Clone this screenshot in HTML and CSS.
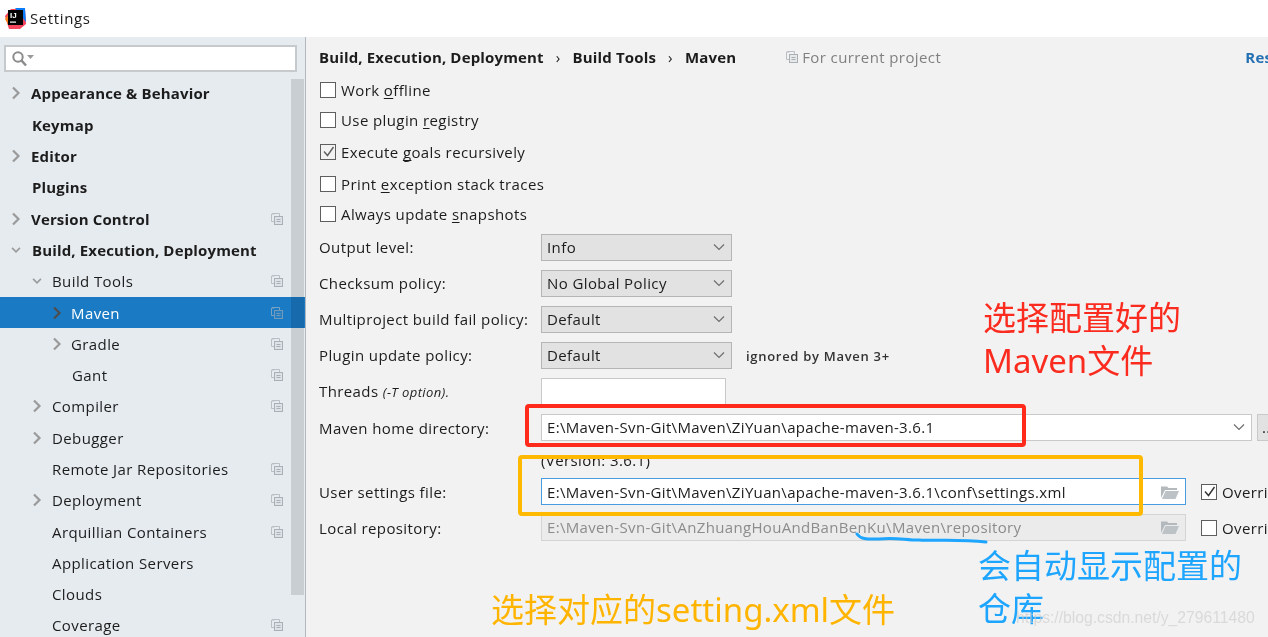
FILE: index.html
```html
<!DOCTYPE html>
<html lang="en">

<head>
    <meta charset="UTF-8">
    <meta name="viewport" content="width=device-width, initial-scale=1.0">
    <title>Settings</title>
    <link rel="stylesheet" href="styles.css">
</head>

<body>
    <svg class="defs" width="0" height="0">
        <symbol id="copy" viewBox="0 0 12 12">
            <path d="M3.5 1H0.5V8.5H3M1 .5H8.5V3" fill="none" stroke="#b9bfc4"/>
            <rect x="3.5" y="3.5" width="8" height="8" fill="#a9afb5" fill-opacity=".15" stroke="#a9afb5"/>
            <path d="M5.5 6.5H9.5M5.5 8.5H9.5" stroke="#a9afb5"/>
        </symbol>
        <symbol id="chev-right" viewBox="0 0 10 14">
            <path d="M2 1.5L7.5 7L2 12.5" fill="none" stroke="#9a9a9a" stroke-width="2.2"/>
        </symbol>
        <symbol id="chev-down" viewBox="0 0 14 10">
            <path d="M1.5 2L7 7.5L12.5 2" fill="none" stroke="#9a9a9a" stroke-width="2.2"/>
        </symbol>
        <symbol id="caret" viewBox="0 0 12 8">
            <path d="M1 1.5L6 6.5L11 1.5" fill="none" stroke="#6e6e6e" stroke-width="1.2"/>
        </symbol>
        <symbol id="folder" viewBox="0 0 18 14">
            <path d="M0 1.5H6L7.5 3H16V5H4L0 13Z" fill="#b4b9bd"/>
            <path d="M4.5 6H18L14.5 14H1Z" fill="#bcc2c6"/>
        </symbol>
    </svg>

    <header class="titlebar">
        <svg class="app-icon" width="21" height="21" viewBox="0 0 21 21">
            <path d="M0 8L6 1H20L21 16L15 21H4Z" fill="#f5455c"/>
            <path d="M10 0H20L21 14Z" fill="#087cfa"/>
            <path d="M0 11L4 6V18Z" fill="#fc801d"/>
            <rect x="3" y="2" width="15" height="15" fill="#000"/>
            <text x="5" y="10" class="app-icon-text">IJ</text>
            <rect x="5" y="13.5" width="6" height="1.2" fill="#fff"/>
        </svg>
        <span class="title-text">Settings</span>
    </header>

    <div class="window">
        <aside class="sidebar">
            <div class="search">
                <svg width="24" height="18" viewBox="0 0 24 18">
                    <circle cx="7" cy="7" r="4.7" fill="none" stroke="#8c8c8c" stroke-width="2"/>
                    <path d="M10.5 10.5L15 15.5" stroke="#8c8c8c" stroke-width="2.6"/>
                    <path d="M16 5H23L19.5 9Z" fill="#9a9a9a"/>
                </svg>
            </div>
            <ul class="tree">
                <li class="node bold"><svg class="chev"><use href="#chev-right"/></svg>Appearance &amp; Behavior</li>
                <li class="node bold leaf">Keymap</li>
                <li class="node bold"><svg class="chev"><use href="#chev-right"/></svg>Editor</li>
                <li class="node bold leaf">Plugins</li>
                <li class="node bold"><svg class="chev"><use href="#chev-right"/></svg>Version Control<svg class="copy"><use href="#copy"/></svg></li>
                <li class="node bold open"><svg class="chev"><use href="#chev-down"/></svg>Build, Execution, Deployment</li>
                <li class="node lvl2"><svg class="chev"><use href="#chev-down"/></svg>Build Tools<svg class="copy"><use href="#copy"/></svg></li>
                <li class="node lvl3 selected"><svg class="chev"><use href="#chev-right"/></svg>Maven<svg class="copy"><use href="#copy"/></svg></li>
                <li class="node lvl3"><svg class="chev"><use href="#chev-right"/></svg>Gradle<svg class="copy"><use href="#copy"/></svg></li>
                <li class="node lvl3 leaf">Gant<svg class="copy"><use href="#copy"/></svg></li>
                <li class="node lvl2"><svg class="chev"><use href="#chev-right"/></svg>Compiler<svg class="copy"><use href="#copy"/></svg></li>
                <li class="node lvl2"><svg class="chev"><use href="#chev-right"/></svg>Debugger</li>
                <li class="node lvl2 leaf">Remote Jar Repositories<svg class="copy"><use href="#copy"/></svg></li>
                <li class="node lvl2"><svg class="chev"><use href="#chev-right"/></svg>Deployment<svg class="copy"><use href="#copy"/></svg></li>
                <li class="node lvl2 leaf">Arquillian Containers<svg class="copy"><use href="#copy"/></svg></li>
                <li class="node lvl2 leaf">Application Servers</li>
                <li class="node lvl2 leaf">Clouds</li>
                <li class="node lvl2 leaf">Coverage<svg class="copy"><use href="#copy"/></svg></li>
            </ul>
            <div class="scrollbar"></div>
        </aside>

        <main class="content">
            <div class="crumbs">
                <b>Build, Execution, Deployment</b><i class="sep">›</i>
                <b>Build Tools</b><i class="sep">›</i>
                <b>Maven</b>
                <span class="scope"><svg class="scope-icon"><use href="#copy"/></svg>For current project</span>
                <b class="reset">Res</b>
            </div>

            <div class="check-row"><span class="box"></span><span>Work <u>o</u>ffline</span></div>
            <div class="check-row short"><span class="box"></span><span>Use plugin <u>r</u>egistry</span></div>
            <div class="check-row tall"><span class="box checked"><svg width="13" height="13" viewBox="0 0 13 13"><path d="M2 6.5L5.5 10.5L11.5 2" fill="none" stroke="#5f5f5f" stroke-width="1.4"/></svg></span><span>Execute <u>g</u>oals recursively</span></div>
            <div class="check-row"><span class="box"></span><span>Print <u>e</u>xception stack traces</span></div>
            <div class="check-row last"><span class="box"></span><span>Always update <u>s</u>napshots</span></div>

            <div class="form-row">
                <label>Output level:</label>
                <div class="select">Info<svg class="caret"><use href="#caret"/></svg></div>
            </div>
            <div class="form-row">
                <label>Checksum policy:</label>
                <div class="select">No Global Policy<svg class="caret"><use href="#caret"/></svg></div>
            </div>
            <div class="form-row">
                <label>Multiproject build fail policy:</label>
                <div class="select">Default<svg class="caret"><use href="#caret"/></svg></div>
            </div>
            <div class="form-row">
                <label>Plugin update policy:</label>
                <div class="select">Default<svg class="caret"><use href="#caret"/></svg></div>
                <span class="hint">ignored by Maven 3+</span>
            </div>
            <div class="form-row">
                <label>Threads <em>(-T option).</em></label>
                <div class="field threads"></div>
            </div>
            <div class="form-row lower">
                <label>Maven home directory:</label>
                <div class="field home">E:\Maven-Svn-Git\Maven\ZiYuan\apache-maven-3.6.1<svg class="caret"><use href="#caret"/></svg></div>
                <div class="more">...</div>
            </div>
            <div class="version-row">(Version: 3.6.1)</div>
            <div class="form-row lower">
                <label>User settings file:</label>
                <div class="field path focused">E:\Maven-Svn-Git\Maven\ZiYuan\apache-maven-3.6.1\conf\settings.xml<svg class="folder"><use href="#folder"/></svg></div>
                <span class="box checked override-box"><svg width="13" height="13" viewBox="0 0 13 13"><path d="M2 6.5L5.5 10.5L11.5 2" fill="none" stroke="#333" stroke-width="1.4"/></svg></span>
                <span class="override">Overri</span>
            </div>
            <div class="form-row lower">
                <label>Local repository:</label>
                <div class="field path disabled">E:\Maven-Svn-Git\AnZhuangHouAndBanBenKu\Maven\repository<svg class="folder"><use href="#folder"/></svg></div>
                <span class="box override-box"></span>
                <span class="override">Overri</span>
            </div>
        </main>
    </div>

    <!-- annotations drawn on top of the screenshot -->
    <div class="mark mark-red"></div>
    <div class="mark mark-yellow"></div>
    <svg class="scribble" width="140" height="16" viewBox="0 0 140 16">
        <path d="M2 2C6 8 14 7 24 7C40 5 50 8 64 8C84 9 104 7 131 10" fill="none" stroke="#1ea5ff" stroke-width="3" stroke-linecap="round"/>
    </svg>
    <p class="note note-red">选择配置好的<br>Maven文件</p>
    <p class="note note-blue">会自动显示配置的<br>仓库</p>
    <p class="note note-yellow">选择对应的setting.xml文件</p>
    <span class="watermark">https://blog.csdn.net/y_279611480</span>
</body>

</html>
```

FILE: styles.css
```css
* {
    box-sizing: border-box;
}

html,
body {
    margin: 0;
    height: 637px;
    overflow: hidden;
}

body {
    position: relative;
    font-family: "Open Sans", "Noto Sans", Arial, sans-serif;
    font-size: 15px;
    letter-spacing: 0.4px;
    color: #1c1c1c;
    background-color: #f2f2f2;
}

b,
.bold {
    font-weight: 700;
    letter-spacing: 0.15px;
}

.defs {
    position: absolute;
}

.titlebar {
    display: flex;
    align-items: center;
    gap: 4px;
    height: 37px;
    padding-left: 5px;
    background-color: #ffffff;
}

.title-text {
    padding-bottom: 2px;
    letter-spacing: 0.6px;
}

.app-icon-text {
    font-family: "Liberation Sans", sans-serif;
    font-size: 8px;
    font-weight: bold;
    letter-spacing: 0;
    fill: #ffffff;
}

.window {
    display: flex;
    height: 600px;
}

/* left tree */
.sidebar {
    position: relative;
    flex: none;
    width: 306px;
    padding-top: 8px;
    overflow: hidden;
    background-color: #e6ebf0;
    border-right: 1px solid #b4b8bc;
}

.search {
    display: flex;
    align-items: center;
    width: 293px;
    height: 27px;
    margin-left: 4px;
    padding-left: 5px;
    background-color: #ffffff;
    border: 2px solid #c6cacd;
}

.tree {
    margin: 5.8px 0 0;
    padding: 0;
    list-style: none;
}

.node {
    display: flex;
    align-items: center;
    height: 31.3px;
    padding-left: 11px;
    white-space: nowrap;
}

.node.leaf {
    padding-left: 32px;
}

.node.open .chev {
    margin-right: 11px;
}

.node.lvl2 {
    padding-left: 32px;
}

.node.lvl2.leaf {
    padding-left: 52px;
}

.node.lvl3 {
    padding-left: 52px;
}

.node.lvl3 .chev {
    margin-right: 9px;
}

.node.lvl3.leaf {
    padding-left: 72px;
}

.selected {
    color: #ffffff;
    background-color: #1a7ac4;
}

.chev {
    flex: none;
    width: 10px;
    height: 14px;
    margin-right: 10px;
}

.copy {
    flex: none;
    width: 12px;
    height: 12px;
    margin-left: auto;
    margin-right: 22px;
}

.selected .chev {
    filter: brightness(0.5);
}

.selected .copy {
    opacity: 0.6;
}

.scrollbar {
    position: absolute;
    top: 42px;
    right: 1px;
    width: 13px;
    height: 516px;
    background-color: #dfe0e0;
    mix-blend-mode: multiply;
}

/* right panel */
.content {
    flex: 1;
    min-width: 0;
    padding-left: 13px;
    overflow: hidden;
}

.crumbs {
    display: flex;
    align-items: center;
    height: 37.5px;
    padding-top: 2px;
    white-space: nowrap;
}

.sep {
    margin: 0 12px;
    font-style: normal;
}

.scope {
    display: flex;
    align-items: center;
    margin-left: 50px;
    color: #808080;
}

.scope-icon {
    width: 12px;
    height: 12px;
    margin-right: 4px;
}

.reset {
    margin-left: auto;
    margin-right: -4px;
    color: #2470b3;
}

.check-row {
    display: flex;
    align-items: center;
    height: 31px;
}

.check-row.short {
    height: 29px;
}

.check-row.tall {
    height: 34px;
}

.check-row.last {
    height: 30px;
    padding-bottom: 1px;
}

.box {
    display: flex;
    flex: none;
    align-items: center;
    justify-content: center;
    width: 16px;
    height: 16px;
    margin-left: 1px;
    margin-right: 5px;
    background-color: #ffffff;
    border: 1px solid #5e5e5e;
}

.check-row .box.checked {
    background-color: #f2f2f2;
}

u {
    text-underline-offset: 2px;
    text-decoration-skip-ink: none;
}

.form-row {
    display: flex;
    align-items: center;
    height: 36px;
    white-space: nowrap;
}

.form-row label {
    flex: none;
    width: 222px;
    padding-bottom: 2px;
}

.form-row.lower label {
    padding-top: 1px;
    padding-bottom: 0;
}

em {
    font-size: 13px;
}

.select {
    display: flex;
    flex: none;
    align-items: center;
    justify-content: space-between;
    width: 191px;
    height: 27px;
    padding: 0 5px 1px;
    background-color: #e2e2e2;
    border: 1px solid #b5b5b5;
}

.caret {
    width: 12px;
    height: 8px;
    margin-right: 1px;
}

.hint {
    margin-left: 14px;
    font-size: 13px;
    font-weight: 600;
    letter-spacing: 0.7px;
    color: #333333;
}

.field {
    display: flex;
    flex: none;
    align-items: center;
    justify-content: space-between;
    height: 27px;
    padding: 0 5px;
    letter-spacing: 0.33px;
    background-color: #ffffff;
    border: 1px solid #c9c9c9;
}

.threads {
    width: 185px;
}

.home {
    width: 711px;
    padding-bottom: 1px;
}

.more {
    flex: none;
    width: 20px;
    height: 27px;
    margin-left: 5px;
    padding-left: 4px;
    line-height: 24px;
    background-color: #e2e2e2;
    border: 1px solid #c9c9c9;
}

.version-row {
    height: 28px;
    padding-left: 222px;
    line-height: 28px;
}

.path {
    width: 645px;
    padding-right: 6px;
}

.focused {
    border-color: #4a9ce0;
}

.disabled {
    padding-bottom: 1px;
    color: #8c8c8c;
    background-color: #ebebeb;
    border-color: #d4d4d4;
}

.folder {
    width: 18px;
    height: 14px;
}

.override-box {
    margin-left: 15px;
}

.override {
    flex: none;
}

/* annotations */
.mark {
    position: absolute;
    border-radius: 4px;
}

.mark-red {
    top: 404px;
    left: 525px;
    width: 501px;
    height: 43px;
    border: 4px solid #ff2a1c;
}

.mark-yellow {
    top: 455px;
    left: 518px;
    width: 625px;
    height: 61px;
    border: 4px solid #ffb900;
}

.scribble {
    position: absolute;
    top: 532px;
    left: 855px;
}

.note {
    position: absolute;
    margin: 0;
    font-family: "Noto Sans", "Noto Sans CJK SC", sans-serif;
    font-size: 33px;
    letter-spacing: 0;
    line-height: 43px;
    white-space: nowrap;
}

.note-red {
    top: 296px;
    left: 983px;
    color: #fb2c1f;
}

.note-blue {
    top: 544px;
    left: 978px;
    color: #1ea5ff;
}

.note-yellow {
    top: 588px;
    left: 491px;
    color: #ffb400;
}

.watermark {
    position: absolute;
    top: 609px;
    left: 1016px;
    font-family: "Liberation Sans", Arial, sans-serif;
    font-size: 15.7px;
    letter-spacing: 0;
    color: rgba(205, 205, 205, 0.65);
    white-space: nowrap;
}
```
